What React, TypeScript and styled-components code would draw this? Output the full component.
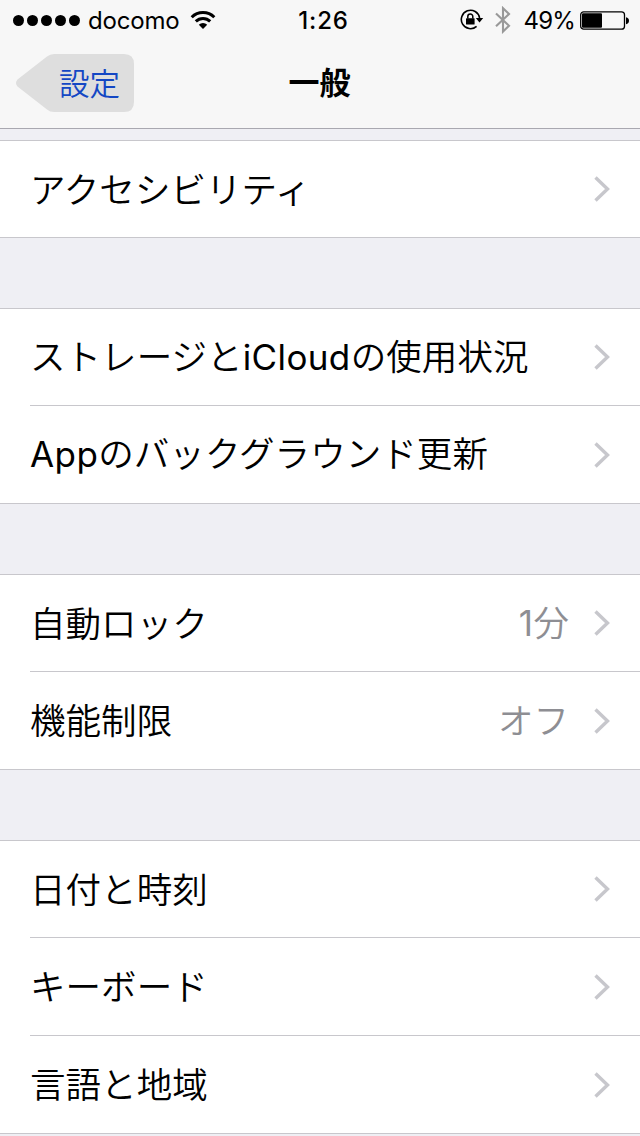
import React from 'react';
import styled, { createGlobalStyle } from 'styled-components';

const GlobalStyle = createGlobalStyle`
  * { box-sizing: border-box; }
  body {
    margin: 0;
    background: #efeff4;
    color: #000;
    font-family: 'Noto Sans CJK JP', sans-serif;
  }
`;

const Screen = styled.div`
  width: 640px;
  height: 1136px;
  overflow: hidden;
  background: #efeff4;
`;

const Header = styled.header`
  height: 129px;
  background: #f7f7f7;
  border-bottom: 1px solid #a9a8b0;
`;

const StatusBar = styled.div`
  display: grid;
  grid-template-columns: 1fr auto 1fr;
  align-items: center;
  height: 40px;
  padding: 0 11px 0 13px;
  font-family: Inter, sans-serif;
  font-size: 24px;
  line-height: 38px;
`;

const StatusGroup = styled.div<{ $end?: boolean }>`
  display: flex;
  align-items: center;
  justify-content: ${(p) => (p.$end ? 'flex-end' : 'flex-start')};
`;

const SignalDots = styled.div`
  display: flex;
  gap: 3px;
  margin-right: 8px;
`;

const Dot = styled.span`
  width: 11px;
  height: 11px;
  border-radius: 50%;
  background: #000;
`;

const Carrier = styled.span`
  padding-top: 2px;
  letter-spacing: -0.2px;
  margin-right: 11px;
`;

const Clock = styled.span`
  padding: 2px 0 0 5px;
  font-weight: 500;
  letter-spacing: 0.8px;
`;

const Percent = styled.span`
  padding-top: 2px;
  letter-spacing: -0.8px;
  margin: 0 5px 0 12px;
`;

const NavBar = styled.nav`
  display: grid;
  grid-template-columns: 1fr auto 1fr;
  align-items: center;
  height: 88px;
  padding: 0 16px;
`;

const BackButton = styled.button`
  position: relative;
  width: 118px;
  height: 58px;
  margin-top: -2px;
  padding: 0 14px 2px 0;
  border: 0;
  background: none;
  color: #1447c4;
  font: 350 30.5px/56px 'Noto Sans CJK JP', sans-serif;
  text-align: right;
`;

const BackShape = styled.svg`
  position: absolute;
  inset: 0;
`;

const BackLabel = styled.span`
  position: relative;
`;

const Title = styled.h1`
  margin: 0 1px 6px 0;
  font-size: 31px;
  line-height: 80px;
  font-weight: 700;
`;

const List = styled.main`
  display: flex;
  flex-direction: column;
  gap: 70px;
  padding-top: 11px;
`;

const Group = styled.section`
  border-top: 1px solid #c8c7cc;
  border-bottom: 1px solid #c8c7cc;
  background: #fff;
`;

const Row = styled.div`
  display: flex;
  align-items: center;
  height: 97px;
  margin-left: 30px;
  padding-right: 30px;
  font-size: 35.5px;
  font-weight: 350;
  line-height: 92px;
  letter-spacing: 0.06px;
  white-space: nowrap;

  &:first-child { height: 96px; }
  & + & {
    height: 98px;
    border-top: 1px solid #c8c7cc;
  }
`;

const RowLabel = styled.span`
  flex: 1;
  padding-bottom: 3px;
`;

const RowValue = styled.span`
  padding-bottom: 3px;
  color: #8e8e93;
  margin-right: 25px;
`;

const Latin = styled.span`
  font-family: Inter, sans-serif;
  font-size: 35px;
  font-weight: 400;
  letter-spacing: 0.4px;
`;

const Chevron = () => (
  <svg width="16" height="26" viewBox="0 0 16 26" fill="none">
    <path d="M1.5 1.5 13.5 13 1.5 24.5" stroke="#c7c7cc" strokeWidth="3.4" />
  </svg>
);

const WifiIcon = () => (
  <svg width="26" height="20" viewBox="0 0 26 20" fill="none" stroke="#000" strokeWidth="3">
    <path d="M1.7 7.2a16 16 0 0 1 22.6 0" />
    <path d="M5.8 11.4a10.2 10.2 0 0 1 14.4 0" />
    <path d="M13 19 8.8 14.8a6 6 0 0 1 8.4 0Z" fill="#000" stroke="none" />
  </svg>
);

const RotationLockIcon = () => (
  <svg width="24" height="22" viewBox="0 0 24 22" fill="none" stroke="#000">
    <path d="M16.6 17.4A9.2 9.2 0 1 1 19.6 9" strokeWidth="1.6" />
    <path d="M15.8 9h7.4l-3.7 4.4Z" fill="#000" stroke="none" />
    <rect x="6" y="9.2" width="8.6" height="6.4" rx="0.6" fill="#000" stroke="none" />
    <path d="M7.8 9.5V7.6a2.5 2.5 0 0 1 5 0v1.9" strokeWidth="1.5" />
  </svg>
);

const BluetoothIcon = () => (
  <svg width="16" height="28" viewBox="0 0 16 28" fill="none" stroke="#999" strokeWidth="2.1">
    <path d="M1 7.5 14 19.8 8 25.6V2.2l6 5.8L1 20.3" />
  </svg>
);

const BatteryIcon = () => (
  <svg width="49" height="20" viewBox="0 0 49 20">
    <rect x="0.7" y="1.8" width="43.8" height="17.4" rx="3" fill="none" stroke="#000" strokeWidth="1.3" />
    <rect x="2" y="3.2" width="20" height="14.6" rx="1" />
    <path d="M46 7.2q3 .9 3 3.5t-3 3.5Z" />
  </svg>
);

const StatusIcons = styled.div`
  display: flex;
  align-items: center;
  gap: 11px;
`;

type Item = { label: React.ReactNode; value?: React.ReactNode };

const groups: Item[][] = [
  [{ label: 'アクセシビリティ' }],
  [
    { label: <>ストレージと<Latin>iCloud</Latin>の使用状況</> },
    { label: <><Latin>App</Latin>のバックグラウンド更新</> },
  ],
  [
    { label: '自動ロック', value: <><Latin>1</Latin>分</> },
    { label: '機能制限', value: 'オフ' },
  ],
  [{ label: '日付と時刻' }, { label: 'キーボード' }, { label: '言語と地域' }],
];

export default function App() {
  return (
    <Screen lang="ja">
      <GlobalStyle />
      <Header>
        <StatusBar>
          <StatusGroup>
            <SignalDots>
              {[0, 1, 2, 3, 4].map((n) => <Dot key={n} />)}
            </SignalDots>
            <Carrier>docomo</Carrier>
            <WifiIcon />
          </StatusGroup>
          <Clock>1:26</Clock>
          <StatusGroup $end>
            <StatusIcons>
              <RotationLockIcon />
              <BluetoothIcon />
            </StatusIcons>
            <Percent>49%</Percent>
            <BatteryIcon />
          </StatusGroup>
        </StatusBar>
        <NavBar>
          <BackButton>
            <BackShape width="118" height="58" viewBox="0 0 118 58">
              <path
                d="M1.5 25.5 31 2.5Q34 0 38 0H108Q118 0 118 10V48Q118 58 108 58H38Q34 58 31 55.5L1.5 32.5Q-1.5 29 1.5 25.5Z"
                fill="#dedede"
              />
            </BackShape>
            <BackLabel>設定</BackLabel>
          </BackButton>
          <Title>一般</Title>
        </NavBar>
      </Header>
      <List>
        {groups.map((items, g) => (
          <Group key={g}>
            {items.map((item, i) => (
              <Row key={i}>
                <RowLabel>{item.label}</RowLabel>
                {item.value && <RowValue>{item.value}</RowValue>}
                <Chevron />
              </Row>
            ))}
          </Group>
        ))}
      </List>
    </Screen>
  );
}
